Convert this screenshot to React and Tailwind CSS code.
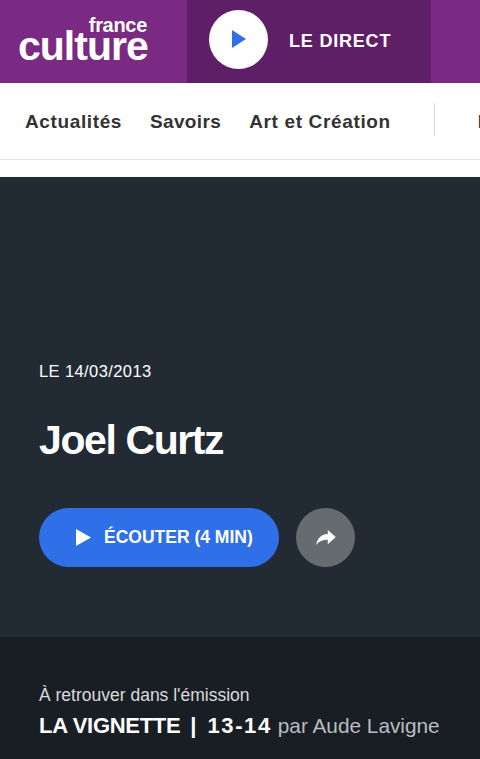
export default function App() {
  return (
    <div className="w-[480px] h-[759px] overflow-hidden bg-white flex flex-col font-['Liberation_Sans',Arial,sans-serif]">
      <header className="h-[83px] shrink-0 bg-[#7b2a84] flex">
        <div className="w-[187px] shrink-0 pl-[18px] pt-[18px] flex flex-col">
          <div className="w-[129px] text-right text-[20px] leading-[14px] font-bold tracking-[-0.3px] text-white">france</div>
          <div className="w-[132px] text-[41px] leading-[28px] font-bold tracking-[-1px] text-white">culture</div>
        </div>
        <div className="w-[244px] shrink-0 bg-[#5f1f67] pl-[22px] pb-[5px] flex items-center">
          <div className="w-[59px] h-[59px] rounded-full bg-white flex items-center justify-center">
            <svg width="14" height="18" viewBox="0 0 14 18" className="ml-px"><path d="M0 0L14 9L0 18Z" fill="#2f70e8" /></svg>
          </div>
          <span className="ml-[21px] pt-[5px] text-[18px] font-bold tracking-[0.8px] text-white">LE DIRECT</span>
        </div>
      </header>
      <nav className="h-[77px] shrink-0 border-b border-[#e4e4e4] flex items-center pl-[25px] pt-[2px] overflow-hidden">
        <span className="text-[#333333] text-[19px] font-bold tracking-[0.62px] whitespace-nowrap">Actualités</span>
        <span className="ml-[28px] text-[#333333] text-[19px] font-bold tracking-[0.35px] whitespace-nowrap">Savoirs</span>
        <span className="ml-[28px] text-[#333333] text-[19px] font-bold tracking-[0.65px] whitespace-nowrap">Art et Création</span>
        <div className="ml-[43px] w-px h-[33px] -mt-[5px] bg-[#d8d8d8] shrink-0" />
        <span className="ml-[43px] text-[#333333] text-[19px] font-bold whitespace-nowrap">P</span>
      </nav>
      <div className="h-[17px] shrink-0 bg-white" />
      <section className="h-[460px] shrink-0 bg-[#222a33] pl-[39px] pt-[185px]">
        <div className="text-[16.5px] leading-[18px] tracking-[0.4px] text-white">LE 14/03/2013</div>
        <h1 className="mt-[36px] text-[41px] leading-[48px] font-bold tracking-[-1.4px] text-white">Joel Curtz</h1>
        <div className="mt-[44px] flex gap-[17px]">
          <div className="w-[240px] h-[59px] rounded-full bg-[#2f70e8] flex items-center pl-[37px]">
            <svg width="15" height="17" viewBox="0 0 15 17"><path d="M0 0L15 8.5L0 17Z" fill="#fff" /></svg>
            <span className="ml-[13px] text-[17.5px] font-bold text-white whitespace-nowrap">ÉCOUTER (4 MIN)</span>
          </div>
          <div className="w-[59px] h-[59px] rounded-full bg-[#666b70] flex items-center justify-center">
            <svg width="20" height="16" viewBox="0 0 22 18"><path d="M13 0L22 8L13 16V11C7 11 3 12.5 0 17C1 10 5 5 13 4.5Z" fill="#fff" /></svg>
          </div>
        </div>
      </section>
      <section className="flex-1 bg-[#191e25] pl-[39px] pt-[48px]">
        <div className="text-[17.5px] leading-[20px] text-[#d9dadc]">À retrouver dans l'émission</div>
        <div className="mt-[6px] flex items-baseline whitespace-nowrap leading-[30px]">
          <span className="text-[22px] font-bold tracking-[-0.3px] text-white">LA VIGNETTE</span>
          <span className="ml-[10px] text-[22px] font-bold text-white">|</span>
          <span className="ml-[11px] text-[22px] font-bold tracking-[1.6px] text-white">13-14</span>
          <span className="ml-[6px] text-[20.8px] text-[#b9bcc0]">par Aude Lavigne</span>
        </div>
      </section>
    </div>
  );
}
